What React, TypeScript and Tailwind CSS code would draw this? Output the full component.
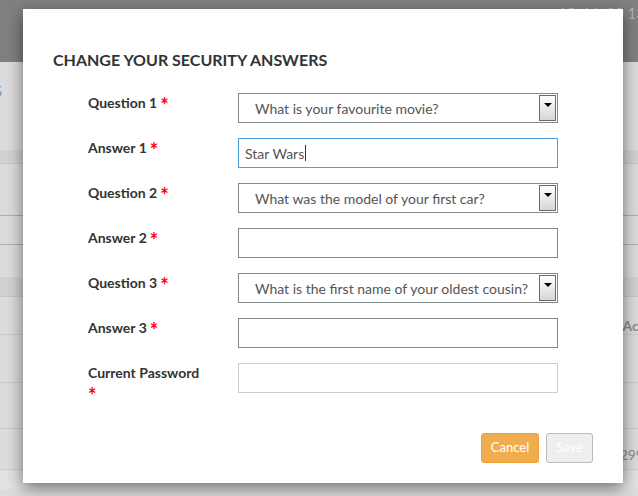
import React from 'react';

const questions = [
  { label: 'Question 1', kind: 'select', value: 'What is your favourite movie?' },
  { label: 'Answer 1', kind: 'focused', value: 'Star Wars' },
  { label: 'Question 2', kind: 'select', value: 'What was the model of your first car?' },
  { label: 'Answer 2', kind: 'input', value: '' },
  { label: 'Question 3', kind: 'select', value: 'What is the first name of your oldest cousin?' },
  { label: 'Answer 3', kind: 'input', value: '' },
];

function Star({ first }: { first?: boolean }) {
  return (
    <span className={`text-[#ff0000] text-[20px] leading-[14px] font-bold inline-block translate-y-[5px] ${first ? '' : 'ml-[3px]'}`}>*</span>
  );
}

function SelectBox({ value }: { value: string }) {
  return (
    <div className="w-[320px] h-[30px] border border-[#7f8a8a] bg-white flex items-center justify-between pl-[16px] pr-[1px]">
      <span className="text-[14px] text-[#555]">{value}</span>
      <div className="w-[17px] h-[26px] border border-[#6b6b6b] bg-gradient-to-b from-white to-[#d6d6d6] flex justify-center pt-[7px]">
        <div className="w-0 h-0 border-l-[4px] border-r-[4px] border-t-[4px] border-l-transparent border-r-transparent border-t-black" />
      </div>
    </div>
  );
}

function FormRow({ label, children }: { label: React.ReactNode; children: React.ReactNode }) {
  return (
    <div className="flex mb-[15px]">
      <div className="w-[122px] mr-[28px] text-[14px] leading-[20px] font-bold text-[#333]">{label}</div>
      {children}
    </div>
  );
}

export default function App() {
  return (
    <div className="relative w-[638px] h-[496px] overflow-hidden bg-[#dcdcdc] font-['Lato','Open_Sans',sans-serif]">
      {/* page behind the overlay */}
      <div className="h-[62px] bg-[#808080] pl-[558px] pt-[1px]">
        <span className="text-[15px] text-[#b4b4b4] whitespace-nowrap">15/11/20 13:45</span>
      </div>
      <div className="h-[88px] pt-[8px]">
        <span className="text-[24px] text-[#7d9ec0] ml-[-8px]">s</span>
      </div>
      <div className="h-[14px] bg-[#d2d2d2] border-b border-[#c8c8c8]" />
      <div className="h-[52px] border-b border-[#a8b0b0]" />
      <div className="h-[29px] border-b border-[#a8b0b0]" />
      <div className="h-[32px]" />
      <div className="h-[20px] bg-[#d2d2d2] border-b border-[#c8c8c8]" />
      <div className="h-[38px] border-b border-[#cacaca] flex justify-end items-end">
        <span className="text-[14px] font-bold text-[#8a8a8a] mr-[-6px] mb-[-2px]">Act</span>
      </div>
      <div className="h-[48px] border-b border-[#cacaca]" />
      <div className="h-[46px] border-b border-[#cacaca]" />
      <div className="h-[40px] flex justify-end items-center">
        <span className="text-[14px] text-[#8a8a8a] mr-[-6px] mt-[10px]">299</span>
      </div>
      <div className="h-[20px] bg-[#e2e2e2] border-t border-[#cfcfcf]" />

      {/* modal */}
      <div className="absolute left-[23px] top-[9px] w-[600px] h-[474px] bg-white shadow-[0_5px_15px_rgba(0,0,0,0.5)] pt-[41px] px-[30px] pb-[20px] flex flex-col">
        <h2 className="text-[16px] leading-[20px] font-bold text-[#333] uppercase mb-[23px]">Change your security answers</h2>
        <div className="pl-[35px]">
          {questions.map((q) => (
            <FormRow key={q.label} label={<>{q.label}<Star /></>}>
              {q.kind === 'select' ? (
                <SelectBox value={q.value} />
              ) : (
                <div className={`w-[320px] h-[30px] border bg-white flex items-center pl-[6px] text-[14px] text-[#555] ${q.kind === 'focused' ? 'border-[#4a9fe0]' : 'border-[#7f8a8a]'}`}>
                  {q.value}
                  {q.kind === 'focused' && <span className="w-px h-[16px] bg-[#333] ml-[1px]" />}
                </div>
              )}
            </FormRow>
          ))}
          <FormRow label={<>Current Password<br /><Star first /></>}>
            <div className="w-[320px] h-[30px] border border-[#cccccc] bg-white" />
          </FormRow>
        </div>
        <div className="mt-auto flex justify-end gap-[7px]">
          <button className="w-[58px] h-[30px] rounded-[3px] bg-[#f0ad4e] border border-[#eea236] text-white text-[13px]">Cancel</button>
          <button className="w-[47px] h-[30px] rounded-[3px] bg-[#eeeeee] border border-[#bbbbbb] text-white text-[13px]">Save</button>
        </div>
      </div>
    </div>
  );
}
